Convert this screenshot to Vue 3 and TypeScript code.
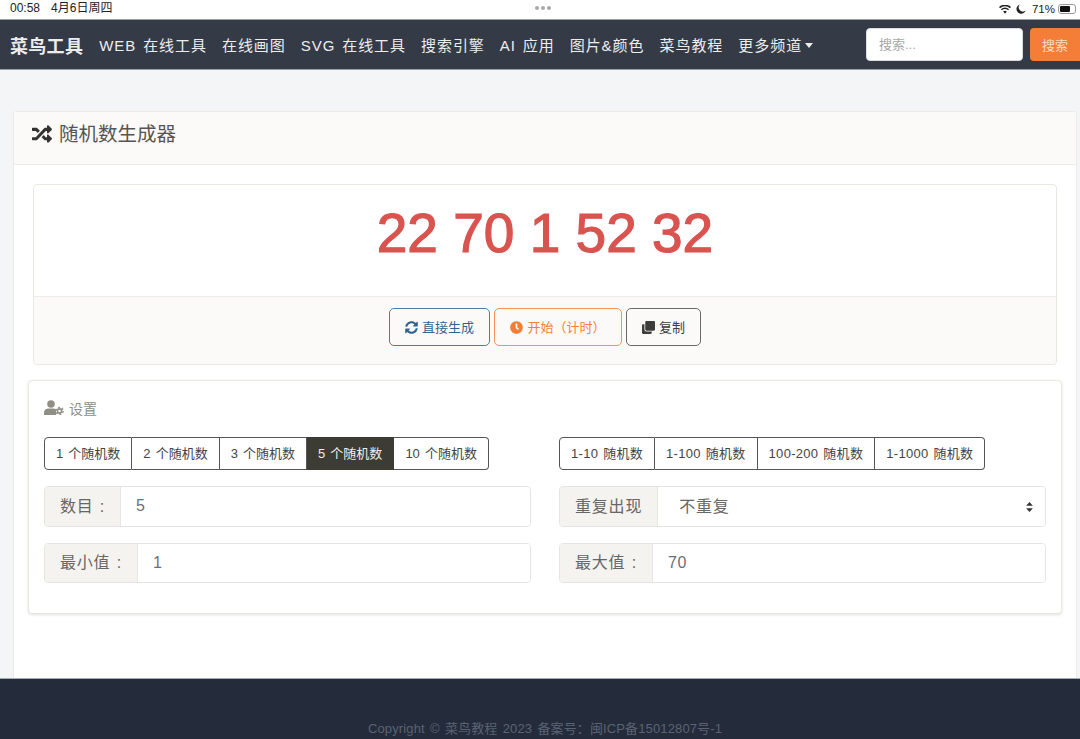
<script setup lang="ts">
const navItems: string[] = ['WEB 在线工具', '在线画图', 'SVG 在线工具', '搜索引擎', 'AI 应用', '图片&颜色', '菜鸟教程']
const countBtns: { label: string; active?: boolean }[] = [
  { label: '1 个随机数' },
  { label: '2 个随机数' },
  { label: '3 个随机数' },
  { label: '5 个随机数', active: true },
  { label: '10 个随机数' },
]
const rangeBtns: string[] = ['1-10 随机数', '1-100 随机数', '100-200 随机数', '1-1000 随机数']
</script>

<template>
  <div class="page">
    <div class="status">
      <div class="status-left"><span>00:58</span><span>4月6日周四</span></div>
      <div class="dots"><i></i><i></i><i></i></div>
      <div class="status-right">
        <svg class="wifi" viewBox="0 0 16 12" width="12" height="9"><path d="M8 11.5 5.6 8.8a3.4 3.4 0 0 1 4.8 0ZM3.9 7 2.6 5.5a7.8 7.8 0 0 1 10.8 0L12.1 7a5.8 5.8 0 0 0-8.2 0ZM1.4 4.3 0 2.8a11.4 11.4 0 0 1 16 0l-1.4 1.5a9.4 9.4 0 0 0-13.2 0Z" fill="#222"/></svg>
        <svg class="moon" viewBox="0 0 12 12" width="10" height="10"><path d="M4.6.6a5.6 5.6 0 1 0 6.9 7.2A5 5 0 0 1 4.6.6Z" fill="#222"/></svg>
        <span class="pct">71%</span>
        <span class="battery"><span class="battery-fill"></span></span>
      </div>
    </div>

    <nav class="nav">
      <span class="brand">菜鸟工具</span>
      <div class="nav-links">
        <span v-for="item in navItems" :key="item" class="nav-link">{{ item }}</span>
        <span class="nav-link">更多频道<i class="caret"></i></span>
      </div>
      <div class="search">
        <input class="search-input" type="text" placeholder="搜索..." />
        <button class="search-btn" type="button">搜索</button>
      </div>
    </nav>

    <main class="main">
      <section class="card">
        <header class="card-head">
          <svg viewBox="0 0 512 512" width="20" height="20" class="head-icon"><path fill="#333" d="M504.971 359.029c9.373 9.373 9.373 24.569 0 33.941l-80 79.984c-15.01 15.01-40.971 4.49-40.971-16.971V416h-58.785a12.004 12.004 0 0 1-8.773-3.812l-70.556-75.596 53.333-57.143L352 336h32v-39.981c0-21.438 25.943-31.998 40.971-16.971l80 79.981zM12 176h84l52.781 56.551 53.333-57.143-70.556-75.596A11.999 11.999 0 0 0 122.785 96H12c-6.627 0-12 5.373-12 12v56c0 6.627 5.373 12 12 12zm372 0v39.984c0 21.46 25.961 31.98 40.971 16.971l80-79.984c9.373-9.373 9.373-24.569 0-33.941l-80-79.981C409.943 24.021 384 34.582 384 56.019V96h-58.785a12.004 12.004 0 0 0-8.773 3.812L96 336H12c-6.627 0-12 5.373-12 12v56c0 6.627 5.373 12 12 12h110.785c3.326 0 6.503-1.381 8.773-3.812L352 176h32z"/></svg>
          <span>随机数生成器</span>
        </header>

        <div class="card-body">
          <div class="result">
            <div class="numbers">22 70 1 52 32</div>
            <div class="actions">
              <button class="act act-blue" type="button">
                <svg viewBox="0 0 512 512" width="13" height="13"><path fill="currentColor" d="M370.72 133.28C339.458 104.008 298.888 87.962 255.848 88c-77.458.068-144.328 53.178-162.791 126.85-1.344 5.363-6.122 9.15-11.651 9.15H24.103c-7.498 0-13.194-6.807-11.807-14.176C33.933 94.924 134.813 8 256 8c66.448 0 126.791 26.136 171.315 68.685L463.03 40.97C478.149 25.851 504 36.559 504 57.941V192c0 13.255-10.745 24-24 24H345.941c-21.382 0-32.09-25.851-16.971-40.971l41.75-41.749zM32 296h134.059c21.382 0 32.09 25.851 16.971 40.971l-41.75 41.75c31.262 29.273 71.835 45.319 114.876 45.28 77.418-.07 144.315-53.144 162.787-126.849 1.344-5.363 6.122-9.15 11.651-9.15h57.304c7.498 0 13.194 6.807 11.807 14.176C478.067 417.076 377.187 504 256 504c-66.448 0-126.791-26.136-171.315-68.685L48.97 471.03C33.851 486.149 8 475.441 8 454.059V320c0-13.255 10.745-24 24-24z"/></svg>
                <span>直接生成</span>
              </button>
              <button class="act act-orange" type="button">
                <svg viewBox="0 0 512 512" width="13" height="13"><path fill="currentColor" d="M256,8C119,8,8,119,8,256S119,504,256,504,504,393,504,256,393,8,256,8Zm92.49,313h0l-20,25a16,16,0,0,1-22.49,2.5h0l-67-49.72a40,40,0,0,1-15-31.23V112a16,16,0,0,1,16-16h32a16,16,0,0,1,16,16V256l58,42.5A16,16,0,0,1,348.49,321Z"/></svg>
                <span>开始（计时）</span>
              </button>
              <button class="act act-dark" type="button">
                <svg viewBox="0 0 512 512" width="13" height="13"><path fill="currentColor" d="M464 0c26.51 0 48 21.49 48 48v288c0 26.51-21.49 48-48 48H176c-26.51 0-48-21.49-48-48V48c0-26.51 21.49-48 48-48h288M176 416c-44.112 0-80-35.888-80-80V128H48c-26.51 0-48 21.49-48 48v288c0 26.51 21.49 48 48 48h288c26.51 0 48-21.49 48-48v-48H176z"/></svg>
                <span>复制</span>
              </button>
            </div>
          </div>

          <div class="settings">
            <div class="settings-title">
              <svg viewBox="0 0 20 15" width="20" height="15">
                <circle cx="7" cy="4" r="3.8" fill="#8f8f86"/>
                <path d="M0 15v-2.2C0 10 2.2 8.6 4.6 8.6h4.8c1 0 2 .3 2.6.8V15Z" fill="#8f8f86"/>
                <circle cx="15.5" cy="11" r="2.1" fill="none" stroke="#8f8f86" stroke-width="1.6"/>
                <circle cx="15.5" cy="11" r="3.6" fill="none" stroke="#8f8f86" stroke-width="1.4" stroke-dasharray="1.9 1.87"/>
              </svg>
              <span>设置</span>
            </div>
            <div class="cols">
              <div class="col">
                <div class="btn-group counts">
                  <button v-for="b in countBtns" :key="b.label" type="button" class="opt" :class="{ active: b.active }">{{ b.label }}</button>
                </div>
                <div class="field">
                  <span class="addon"><span class="addon-text">数目 :</span></span>
                  <input class="control" type="text" value="5" />
                </div>
                <div class="field">
                  <span class="addon"><span class="addon-text">最小值 :</span></span>
                  <input class="control" type="text" value="1" />
                </div>
              </div>
              <div class="col">
                <div class="btn-group ranges">
                  <button v-for="b in rangeBtns" :key="b" type="button" class="opt">{{ b }}</button>
                </div>
                <div class="field">
                  <span class="addon"><span class="addon-text">重复出现</span></span>
                  <div class="select-wrap">
                    <select class="control select">
                      <option>不重复</option>
                      <option>可重复</option>
                    </select>
                    <svg class="select-arrows" viewBox="0 0 8 12" width="7" height="10"><path d="M4 0 8 4.6H0ZM4 12 0 7.4h8Z" fill="#333"/></svg>
                  </div>
                </div>
                <div class="field">
                  <span class="addon"><span class="addon-text">最大值 :</span></span>
                  <input class="control" type="text" value="70" />
                </div>
              </div>
            </div>
          </div>
        </div>
      </section>
    </main>

    <footer class="footer">Copyright © 菜鸟教程 2023 备案号：闽ICP备15012807号-1</footer>
  </div>
</template>

<style>
html, body { margin: 0; padding: 0; background: #f4f5f6; }
</style>

<style scoped>
.page {
  width: 1080px;
  height: 739px;
  display: flex;
  flex-direction: column;
  overflow: hidden;
  font-family: "Liberation Sans", "Noto Sans CJK SC", sans-serif;
  background: #f4f5f6;
  color: #555;
}
.status {
  height: 19px;
  flex: none;
  background: #fff;
  display: flex;
  align-items: center;
  justify-content: space-between;
  padding: 0 0 0 10px;
  font-size: 12px;
  color: #222;
  position: relative;
}
.status-left { display: flex; gap: 11px; line-height: 14px; padding-bottom: 3px; }
.dots { position: absolute; left: 535px; top: 6px; display: flex; gap: 2px; }
.dots i { width: 4px; height: 4px; border-radius: 50%; background: #a9a9a9; }
.status-right { display: flex; align-items: center; gap: 5px; margin-right: 4px; padding-bottom: 1px; }
.pct { font-size: 11.5px; margin: 0 -2px 0 1px; }
.battery {
  width: 18px; height: 10px; box-sizing: border-box;
  border: 1px solid #999; border-radius: 3px; padding: 1px; display: block;
}
.battery-fill { display: block; width: 70%; height: 100%; background: #111; border-radius: 1px; }

.nav {
  height: 51px;
  flex: none;
  box-sizing: border-box;
  background: #353a47;
  border-bottom: 1px solid #9aa0a8;
  border-top: 1px solid #9aa0a8;
  display: flex;
  align-items: center;
  padding-left: 10px;
  color: #eceded;
}
.brand { font-size: 18px; font-weight: 700; letter-spacing: .3px; margin-right: 16px; }
.nav-links { display: flex; gap: 15px; }
.nav-link { font-size: 15px; letter-spacing: .95px; word-spacing: 1.8px; white-space: nowrap; }
.caret {
  display: inline-block;
  margin-left: 3px;
  vertical-align: 3px;
  border-top: 5px solid #eceded;
  border-left: 4px solid transparent;
  border-right: 4px solid transparent;
}
.search { margin-left: auto; display: flex; gap: 7px; }
.search-input {
  width: 157px; height: 33px; box-sizing: border-box;
  border: 1px solid #ddd; border-radius: 4px; padding: 0 12px;
  font: 13px "Liberation Sans", "Noto Sans CJK SC", sans-serif;
  background: #fff;
}
.search-input::placeholder { color: #a8a8a8; opacity: 1; }
.search-btn {
  width: 50px; height: 33px; border: 0; border-radius: 4px 0 0 4px; padding: 0;
  background: #f47e38; color: #fbdcc8;
  font: 13px "Liberation Sans", "Noto Sans CJK SC", sans-serif;
}

.main { flex: 1; min-height: 0; padding: 41px 3px 0 13px; display: flex; }
.card {
  flex: 1;
  background: #fff;
  border: 1px solid #eeebe6;
  border-bottom: 0;
  border-radius: 4px 4px 0 0;
  box-sizing: border-box;
  display: flex;
  flex-direction: column;
}
.card-head {
  height: 53px;
  flex: none;
  box-sizing: border-box;
  background: #fcfaf8;
  border-bottom: 1px solid #f0ece7;
  display: flex;
  align-items: center;
  gap: 7px;
  padding: 0 0 8px 18px;
  font-size: 19.5px;
  line-height: 28px;
  color: #555;
}
.head-icon { flex: none; }
.card-body { padding: 19px 14px 0 14px; }
.result {
  margin: 0 5px;
  border: 1px solid #ebe8e3;
  border-radius: 4px;
  height: 181px;
  box-sizing: border-box;
  display: flex;
  flex-direction: column;
}
.numbers {
  height: 111px;
  flex: none;
  display: flex;
  align-items: center;
  justify-content: center;
  font-size: 55px;
  color: #d9534f;
  -webkit-text-stroke: 1.2px #d9534f;
  white-space: pre;
  padding-bottom: 16px;
  box-sizing: border-box;
}
.actions {
  flex: 1;
  background: #fcfaf8;
  border-top: 1px solid #efebe6;
  border-radius: 0 0 4px 4px;
  display: flex;
  justify-content: center;
  align-items: flex-start;
  gap: 4px;
  padding-top: 11px;
}
.act {
  height: 38px;
  box-sizing: border-box;
  display: inline-flex;
  align-items: center;
  justify-content: center;
  gap: 4px;
  background: transparent;
  border: 1px solid;
  border-radius: 5px;
  font: 13px "Liberation Sans", "Noto Sans CJK SC", sans-serif;
}
.act span { position: relative; top: -1px; }
.act-blue { width: 101px; color: #33628f; border-color: #4f7ca6; }
.act-orange { width: 128px; color: #f47e38; border-color: #f4935a; }
.act-dark { width: 75px; color: #3c3c38; border-color: #6a6a64; }

.settings {
  margin-top: 15px;
  height: 234px;
  box-sizing: border-box;
  border: 1px solid #ebe8e3;
  border-radius: 4px;
  box-shadow: 0 1px 3px rgba(0, 0, 0, .12);
  padding: 0 15px;
  background: #fff;
}
.settings-title {
  display: flex;
  align-items: center;
  gap: 5px;
  height: 56px;
  box-sizing: border-box;
  padding-bottom: 3px;
  font-size: 14px;
  color: #8f8f86;
}
.cols { display: grid; grid-template-columns: 487px 487px; gap: 28px; }
.col { display: flex; flex-direction: column; }
.btn-group { display: flex; }
.counts .opt { word-spacing: 1.5px; }
.ranges .opt { letter-spacing: .3px; word-spacing: 1px; }
.opt {
  height: 33px;
  box-sizing: border-box;
  padding: 0 11px 2px;
  background: #fff;
  border: 1px solid #555;
  border-left-width: 0;
  color: #444;
  font: 13px "Liberation Sans", "Noto Sans CJK SC", sans-serif;
  white-space: nowrap;
}
.opt:first-child { border-left-width: 1px; border-radius: 4px 0 0 4px; }
.opt:last-child { border-radius: 0 4px 4px 0; }
.opt.active { background: #3c3c34; border-color: #3c3c34; color: #eee; }

.field {
  margin-top: 16px;
  height: 40px;
  box-sizing: border-box;
  display: flex;
  border: 1px solid #e4e4e4;
  border-radius: 4px;
  overflow: hidden;
  font-size: 16px;
  letter-spacing: .8px;
  word-spacing: 1px;
}
.btn-group + .field { margin-top: 16px; height: 41px; }
.addon {
  flex: none;
  display: flex;
  align-items: center;
  padding: 0 15px;
  background: #f5f3f0;
  border-right: 1px solid #e8e6e2;
  color: #666;
  white-space: pre;
}
.addon-text { position: relative; top: -2px; }
.control {
  flex: 1;
  min-width: 0;
  width: 100%;
  border: 0;
  outline: 0;
  padding: 0 15px 1px;
  background: #fff;
  color: #6a7077;
  font: 16px "Liberation Sans", "Noto Sans CJK SC", sans-serif;
  letter-spacing: .8px;
}
.select-wrap { flex: 1; position: relative; display: flex; }
.select { appearance: none; -webkit-appearance: none; padding-left: 21px; color: #666; }
.select-arrows { position: absolute; right: 12px; top: 15px; pointer-events: none; }

.footer {
  height: 61px;
  flex: none;
  box-sizing: border-box;
  background: #242c3b;
  border-top: 1px solid #a5abb3;
  display: flex;
  align-items: flex-end;
  justify-content: center;
  padding: 0 0 2px 10px;
  font-size: 13px;
  letter-spacing: .13px;
  word-spacing: 1.5px;
  color: #5a6373;
  white-space: pre;
}
</style>
